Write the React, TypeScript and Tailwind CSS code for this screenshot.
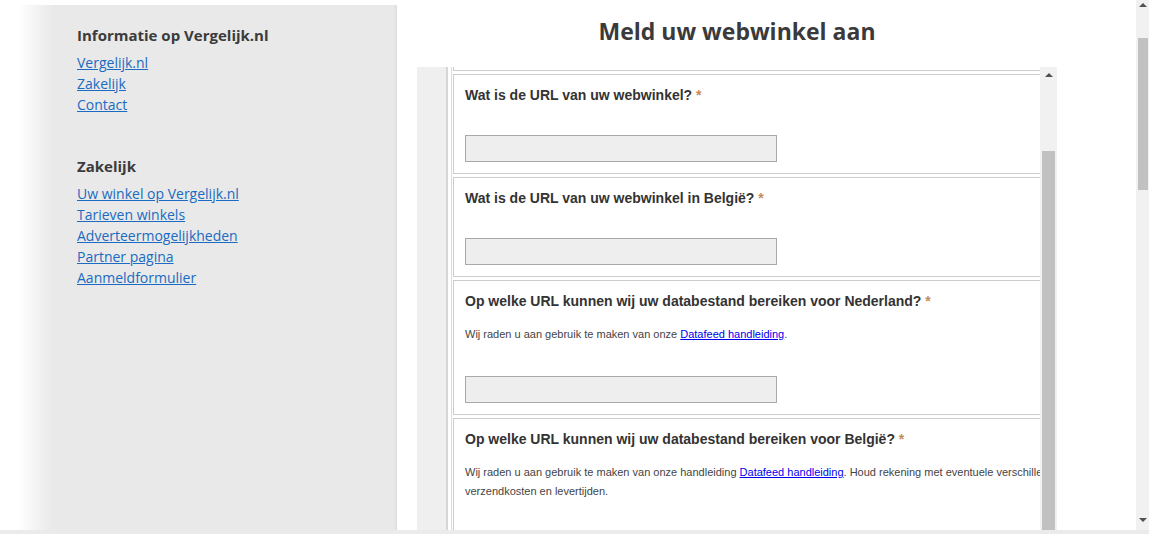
import React from 'react'

const sideFont = { fontFamily: '"Open Sans", "Liberation Sans", sans-serif' }

function Asterisk() {
  return <span className="text-[#c58b5a]"> *</span>
}

function Question({ children }: { children: React.ReactNode }) {
  return (
    <div className="whitespace-nowrap text-[14px] font-bold leading-[20px] text-[#333333]">
      {children}
      <Asterisk />
    </div>
  )
}

function UrlInput({ className = '' }: { className?: string }) {
  return <div className={`h-[27px] w-[312px] border border-[#a9a9a9] bg-[#eeeeee] ${className}`} />
}

function Card({ children }: { children: React.ReactNode }) {
  return (
    <div className="mb-[3px] w-[700px] border border-[#cccccc] bg-white px-[11px] pt-[10px] pb-[11px]">
      {children}
    </div>
  )
}

function Sidebar() {
  return (
    <aside
      className="h-full w-[397px] shrink-0 bg-[linear-gradient(to_right,#ffffff_18px,#e9e9e9_53px)] pt-[20px] pl-[77px] shadow-[inset_-3px_0_3px_-2px_rgba(0,0,0,0.08)]"
      style={sideFont}>
      <h3 className="text-[15px] font-bold leading-[20px] text-[#3b3b3b]">Informatie op Vergelijk.nl</h3>
      <ul className="mt-[7px] text-[14px] leading-[21px] text-[#1a6bc1]">
        <li><a className="underline" href="#">Vergelijk.nl</a></li>
        <li><a className="underline" href="#">Zakelijk</a></li>
        <li><a className="underline" href="#">Contact</a></li>
      </ul>
      <h3 className="mt-[41px] text-[15px] font-bold leading-[20px] text-[#3b3b3b]">Zakelijk</h3>
      <ul className="mt-[7px] text-[14px] leading-[21px] text-[#1a6bc1]">
        <li><a className="underline" href="#">Uw winkel op Vergelijk.nl</a></li>
        <li><a className="underline" href="#">Tarieven winkels</a></li>
        <li><a className="underline" href="#">Adverteermogelijkheden</a></li>
        <li><a className="underline" href="#">Partner pagina</a></li>
        <li><a className="underline" href="#">Aanmeldformulier</a></li>
      </ul>
    </aside>
  )
}

function ArrowUp() {
  return <div className="h-0 w-0 border-x-[4px] border-b-[4px] border-x-transparent border-b-[#505050]" />
}

function ArrowDown() {
  return <div className="h-0 w-0 border-x-[4px] border-t-[4px] border-x-transparent border-t-[#505050]" />
}

function FormFrame() {
  const linkClass = 'text-[#0000ee] underline'
  return (
    <div className="flex h-[463px] w-[640px] overflow-hidden">
      <div className="flex w-[623px] overflow-hidden bg-white">
        <div className="w-[29px] shrink-0 bg-[#efefef]" />
        <div className="flex shrink-0 border-l-2 border-[#d6d6d6] pl-[3px]">
          <div className="border-l border-[#dcdcdc] pl-[1px]">
            <div className="mb-[3px] h-[4px] w-[700px] border-x border-b border-[#cccccc]" />
            <Card>
              <Question>Wat is de URL van uw webwinkel?</Question>
              <UrlInput className="mt-[30px]" />
            </Card>
            <Card>
              <Question>Wat is de URL van uw webwinkel in België?</Question>
              <UrlInput className="mt-[30px]" />
            </Card>
            <Card>
              <Question>Op welke URL kunnen wij uw databestand bereiken voor Nederland?</Question>
              <p className="mt-[14px] text-[11px] leading-[19px] text-[#444444]">
                Wij raden u aan gebruik te maken van onze <a className={linkClass} href="#">Datafeed handleiding</a>.
              </p>
              <UrlInput className="mt-[32px]" />
            </Card>
            <Card>
              <Question>Op welke URL kunnen wij uw databestand bereiken voor België?</Question>
              <p className="mt-[14px] text-[11px] leading-[19px] text-[#444444]">
                <span className="whitespace-nowrap">
                  Wij raden u aan gebruik te maken van onze handleiding{' '}
                  <a className={linkClass} href="#">Datafeed handleiding</a>. Houd rekening met eventuele verschillen in
                </span>
                <br />
                verzendkosten en levertijden.
              </p>
              <UrlInput className="mt-[32px]" />
            </Card>
          </div>
        </div>
      </div>
      <div className="flex w-[17px] shrink-0 flex-col items-center bg-[#f1f1f1]">
        <div className="mt-[6px] mb-[74px]">
          <ArrowUp />
        </div>
        <div className="w-[13px] flex-1 bg-[#c1c1c1]" />
      </div>
    </div>
  )
}

export default function App() {
  return (
    <div className="flex h-[534px] w-full flex-col overflow-hidden bg-white" style={{ fontFamily: '"Liberation Sans", Arial, sans-serif' }}>
      <div className="flex h-[530px]">
        <div className="flex flex-1 flex-col pt-[5px]">
          <div className="flex h-[525px]">
            <Sidebar />
            <main className="ml-[20px] w-[640px]">
              <h1
                className="pt-[11px] text-center text-[23px] font-bold leading-[30px] text-[#3a3a3a]"
                style={sideFont}>
                Meld uw webwinkel aan
              </h1>
              <div className="mt-[21px]">
                <FormFrame />
              </div>
            </main>
          </div>
        </div>
        <div className="flex w-[13px] shrink-0 flex-col items-center bg-[#f1f1f1]">
          <div className="mt-[3px] mb-[31px]">
            <ArrowUp />
          </div>
          <div className="h-[152px] w-[10px] bg-[#c1c1c1]" />
          <div className="flex-1" />
          <div className="mb-[8px]">
            <ArrowDown />
          </div>
        </div>
      </div>
      <div className="h-[4px] bg-[#ebebeb]" />
    </div>
  )
}
